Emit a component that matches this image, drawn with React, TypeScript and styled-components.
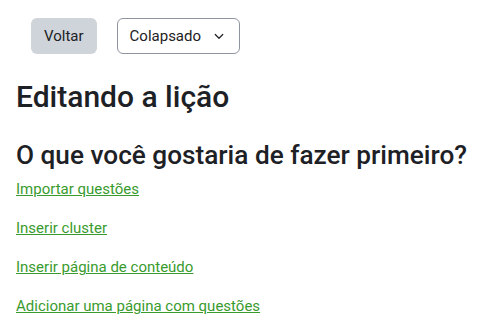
import React from "react";
import styled, { createGlobalStyle } from "styled-components";

const GlobalStyle = createGlobalStyle`
  body {
    margin: 0;
    background: #ffffff;
    font-family: Roboto, "Liberation Sans", sans-serif;
    color: #1d2125;
  }
`;

const Page = styled.div`
  padding: 18px 16px 0 16px;
`;

const Toolbar = styled.div`
  display: flex;
  align-items: center;
  gap: 20px;
  padding-left: 15px;
`;

const BackButton = styled.button`
  height: 36px;
  padding: 0 13px;
  border: none;
  border-radius: 6px;
  background: #ced4da;
  color: #1d2125;
  font-family: inherit;
  font-size: 15px;
`;

const Select = styled.div`
  display: flex;
  align-items: center;
  gap: 12px;
  height: 36px;
  box-sizing: border-box;
  padding: 0 14px 0 12px;
  border: 1px solid #8f959e;
  border-radius: 6px;
  font-size: 15px;
`;

const Title = styled.h2`
  margin: 25px 0 0;
  font-size: 30px;
  font-weight: 500;
  line-height: 1.2;
`;

const Subtitle = styled.h3`
  margin: 25px 0 0;
  font-size: 26.2px;
  font-weight: 500;
  line-height: 1.2;
`;

const Actions = styled.div`
  display: flex;
  flex-direction: column;
  align-items: flex-start;
  gap: 21px;
  margin-top: 9px;
`;

const ActionLink = styled.a`
  color: #399b2e;
  font-size: 15px;
  line-height: 18px;
  text-decoration: underline;
`;

const Chevron = () => (
  <svg width="12" height="12" viewBox="0 0 16 16" fill="none">
    <path d="M3 6l5 5 5-5" stroke="#1d2125" strokeWidth="1.6" strokeLinecap="round" strokeLinejoin="round" />
  </svg>
);

const actions = [
  "Importar questões",
  "Inserir cluster",
  "Inserir página de conteúdo",
  "Adicionar uma página com questões",
];

export default function App() {
  return (
    <>
      <GlobalStyle />
      <Page>
        <Toolbar>
          <BackButton>Voltar</BackButton>
          <Select>
            Colapsado
            <Chevron />
          </Select>
        </Toolbar>
        <Title>Editando a lição</Title>
        <Subtitle>O que você gostaria de fazer primeiro?</Subtitle>
        <Actions>
          {actions.map((a) => (
            <ActionLink href="#" key={a}>
              {a}
            </ActionLink>
          ))}
        </Actions>
      </Page>
    </>
  );
}
